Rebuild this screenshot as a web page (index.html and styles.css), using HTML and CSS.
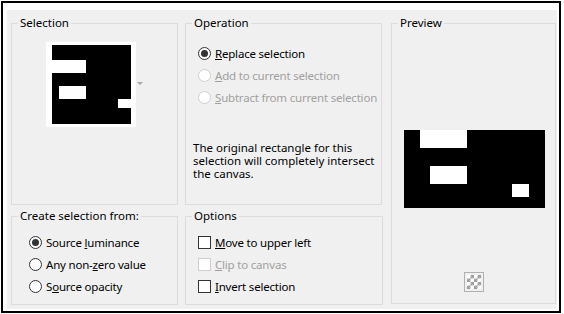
FILE: index.html
```html
<!DOCTYPE html>
<html lang="en">
<head>
  <meta charset="UTF-8" />
  <title>Selection from Mask</title>
  <link rel="stylesheet" href="styles.css">
</head>
<body>
  <div class="frame">
    <div class="dialog">

      <fieldset class="group sel">
        <legend>Selection</legend>
        <div class="thumb-row">
          <div class="thumb">
            <svg width="79" height="79" viewBox="0 0 79 79">
              <rect width="79" height="79" fill="#000"/>
              <rect x="0" y="15" width="34" height="13" fill="#fff"/>
              <rect x="7" y="41" width="27" height="13" fill="#fff"/>
              <rect x="66" y="54" width="13" height="9" fill="#fff"/>
            </svg>
          </div>
          <span class="drop"></span>
        </div>
      </fieldset>

      <fieldset class="group op">
        <legend>Operation</legend>
        <div class="opt"><span class="radio on"></span><span><u>R</u>eplace selection</span></div>
        <div class="opt off"><span class="radio"></span><span><u>A</u>dd to current selection</span></div>
        <div class="opt off"><span class="radio"></span><span><u>S</u>ubtract from current selection</span></div>
        <p class="note">The original rectangle for this selection will completely intersect the canvas.</p>
      </fieldset>

      <fieldset class="group preview">
        <legend>Preview</legend>
        <div class="pv">
          <svg width="141" height="78" viewBox="0 0 141 78">
            <rect width="141" height="78" fill="#000"/>
            <rect x="16" y="0" width="47" height="18" fill="#fff"/>
            <rect x="26" y="36" width="37" height="18" fill="#fff"/>
            <rect x="108" y="54" width="17" height="13" fill="#fff"/>
          </svg>
        </div>
        <div class="checker"><span></span></div>
      </fieldset>

      <fieldset class="group src">
        <legend>Create selection from:</legend>
        <div class="opt"><span class="radio on"></span><span>Source <u>l</u>uminance</span></div>
        <div class="opt"><span class="radio"></span><span>Any non-<u>z</u>ero value</span></div>
        <div class="opt"><span class="radio"></span><span>S<u>o</u>urce opacity</span></div>
      </fieldset>

      <fieldset class="group opts">
        <legend>Options</legend>
        <div class="opt"><span class="check"></span><span><u>M</u>ove to upper left</span></div>
        <div class="opt off"><span class="check"></span><span><u>C</u>lip to canvas</span></div>
        <div class="opt"><span class="check"></span><span><u>I</u>nvert selection</span></div>
      </fieldset>

    </div>
  </div>
</body>
</html>
```

FILE: styles.css
```css
body {
  margin: 0;
  background: #fff;
  font-family: "Noto Sans", "Open Sans", sans-serif;
  font-size: 11.5px;
  color: #000;
}

.frame {
  margin: 1px;
  width: 551px;
  height: 300px;
  border: 2px solid #000;
  padding: 7px 1px 1px 4px;
}

.dialog {
  background: #f0f0f0;
  height: 299px;
  width: 550px;
  box-sizing: border-box;
  padding: 6px 0 0 4px;
  display: grid;
  grid-template-columns: 167px 198px 166px;
  grid-template-rows: 189px 96px;
  column-gap: 7px;
  row-gap: 4px;
}

.dialog .op { margin-right: 1px; }
.dialog .preview { grid-row: 1 / 3; grid-column: 3; margin-left: 1px; margin-bottom: 1px; }

.group {
  margin: 0;
  border: 1px solid #dcdcdc;
  padding: 0;
  min-width: 0;
}

.group legend {
  padding: 0 2px;
  margin-left: 6px;
  line-height: 14px;
}

.thumb-row {
  display: flex;
  align-items: center;
  margin: 12px 0 0 34px;
}

.thumb {
  background: #fff;
  padding: 3px 5px 3px 6px;
  line-height: 0;
}

.drop {
  width: 0;
  height: 0;
  border-left: 3px solid transparent;
  border-right: 3px solid transparent;
  border-top: 3px solid #a8a8a8;
  margin: 0 0 3px 1px;
}

.opt {
  display: flex;
  align-items: center;
  gap: 4px;
  height: 22px;
  white-space: nowrap;
  letter-spacing: -0.2px;
}

.op .opt,
.opts .opt { margin-left: 12px; }
.src .opt { margin-left: 17px; }

.op .opt:first-of-type { margin-top: 12px; }
.src .opt:first-of-type,
.opts .opt:first-of-type { margin-top: 8px; }

.opt.off { color: #a0a0a0; }

.radio {
  width: 13px;
  height: 13px;
  border: 1px solid #333;
  border-radius: 50%;
  background: #fff;
  box-sizing: border-box;
  display: flex;
  align-items: center;
  justify-content: center;
}

.radio.on::after {
  content: "";
  width: 7px;
  height: 7px;
  border-radius: 50%;
  background: #333;
}

.off .radio { border-color: #cfcfcf; }

.check {
  width: 13px;
  height: 13px;
  border: 1px solid #333;
  background: #fff;
  box-sizing: border-box;
}

.off .check { border-color: #cfcfcf; }

.note {
  margin: 33px 0 0 7px;
  width: 185px;
  line-height: 13px;
}

.pv {
  margin: 100px 0 0 12px;
  line-height: 0;
}

.checker {
  width: 20px;
  height: 20px;
  border: 1px solid #b0b0b0;
  box-sizing: border-box;
  margin: 64px 0 0 72px;
  padding: 2px;
  background: #f0f0f0;
}

.checker span {
  display: block;
  width: 14px;
  height: 14px;
  background-color: #fff;
  background-image:
    linear-gradient(45deg, #9c9c9c 25%, transparent 25%, transparent 75%, #9c9c9c 75%),
    linear-gradient(45deg, #9c9c9c 25%, transparent 25%, transparent 75%, #9c9c9c 75%);
  background-size: 7px 7px;
  background-position: 0 0, 3.5px 3.5px;
}
```
